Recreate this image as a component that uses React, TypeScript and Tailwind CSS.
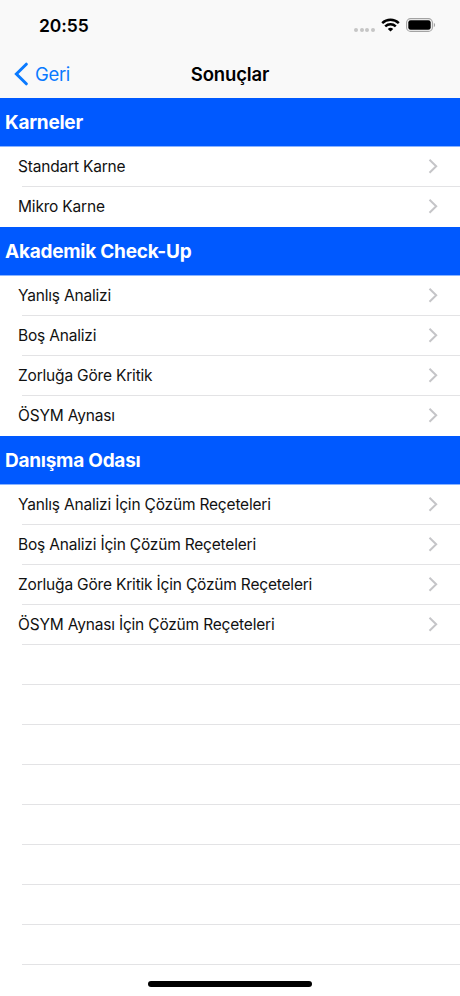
import React from 'react';

const sections = [
  {
    title: 'Karneler',
    items: ['Standart Karne', 'Mikro Karne'],
  },
  {
    title: 'Akademik Check-Up',
    items: ['Yanlış Analizi', 'Boş Analizi', 'Zorluğa Göre Kritik', 'ÖSYM Aynası'],
  },
  {
    title: 'Danışma Odası',
    items: [
      'Yanlış Analizi İçin Çözüm Reçeteleri',
      'Boş Analizi İçin Çözüm Reçeteleri',
      'Zorluğa Göre Kritik İçin Çözüm Reçeteleri',
      'ÖSYM Aynası İçin Çözüm Reçeteleri',
    ],
  },
];

const EMPTY_ROWS = 8;

const StatusBar: React.FC = () => (
  <div className="h-[50px] flex items-center justify-between pl-[39px] pr-6">
    <span className="pt-[2px] text-[17.5px] leading-6 font-semibold tracking-[-0.1px]">20:55</span>
    <div className="flex items-center">
      <div className="flex gap-[1.6px] mt-[10px] mr-[6px]">
        {[0, 1, 2, 3].map(dot => (
          <span key={dot} className="size-1 rounded-full bg-[#c6c6c6]" />
        ))}
      </div>
      <svg className="w-[19px] h-[14px] mr-[6px]" viewBox="0 0 19 14" fill="none" stroke="#000" strokeWidth="2.5">
        <path d="M1.2 5.1C5.9 .7 13.1 .7 17.8 5.1" />
        <path d="M4.2 8.3C7.2 5.5 11.8 5.5 14.8 8.3" />
        <path d="M9.5 13.6 6.8 10.9C8.3 9.5 10.7 9.5 12.2 10.9Z" fill="#000" stroke="none" />
      </svg>
      <svg className="w-[30px] h-[14px]" viewBox="0 0 30 14" fill="none">
        <rect x=".6" y=".6" width="25.8" height="12.8" rx="4" stroke="#a3a3a3" strokeWidth="1.1" />
        <rect x="2.3" y="2.3" width="22.4" height="9.4" rx="2.3" fill="#000" />
        <path d="M27.8 4.8C29.6 5.6 29.6 8.4 27.8 9.2Z" fill="#a3a3a3" />
      </svg>
    </div>
  </div>
);

const NavBar: React.FC = () => (
  <nav className="h-12 grid grid-cols-3 items-center">
    <button className="flex items-center gap-[7px] pl-[14px] text-[#0a7aff]">
      <svg className="w-[14px] h-6" viewBox="0 0 14 24" fill="none" stroke="currentColor" strokeWidth="3" strokeLinecap="round">
        <path d="M12.3 2.2 2.4 12 12.3 21.8" strokeLinejoin="miter" />
      </svg>
      <span className="text-[18.5px] leading-6 tracking-[-0.35px]">Geri</span>
    </button>
    <h1 className="text-center text-[18.5px] leading-6 font-semibold tracking-[-0.15px]">Sonuçlar</h1>
  </nav>
);

const Row: React.FC<{ label: string; last: boolean }> = ({ label, last }) => (
  <li className="relative h-10 flex items-center justify-between pl-[18px] pr-[22px]">
    <span className="text-[15.5px] leading-5 tracking-[-0.19px] text-[#111]">{label}</span>
    <svg className="w-[10px] h-4 mb-[2px]" viewBox="0 0 10 16" fill="none" stroke="#c5c5c8" strokeWidth="2">
      <path d="M1.5 1.7 8.2 8.2 1.5 14.7" />
    </svg>
    {!last && <span className="absolute bottom-0 left-[22px] right-0 h-px bg-[#e3e3e5]" />}
  </li>
);

const App: React.FC = () => (
  <div className="relative w-[460px] h-[996px] overflow-hidden bg-white text-black font-['Inter',sans-serif]">
    <header className="bg-[#f9f9f9]">
      <StatusBar />
      <NavBar />
    </header>
    <main>
      {sections.map((section, index) => (
        <section key={section.title}>
          <h2 className="h-[49px] flex items-center pt-px pl-[5px] bg-[#0059ff] border-b border-[#8ab4ff] text-white text-[19px] leading-6 font-bold tracking-[-0.25px]">
            {section.title}
          </h2>
          <ul>
            {section.items.map((item, i) => (
              <Row
                key={item}
                label={item}
                last={i === section.items.length - 1 && index < sections.length - 1}
              />
            ))}
          </ul>
        </section>
      ))}
      {Array.from({ length: EMPTY_ROWS }, (_, i) => (
        <div key={i} className="h-10 ml-[22px] border-b border-[#e3e3e5]" />
      ))}
    </main>
    <div className="absolute bottom-[9px] left-[148px] w-[164px] h-[6px] rounded-full bg-black" />
  </div>
);

export default App;
